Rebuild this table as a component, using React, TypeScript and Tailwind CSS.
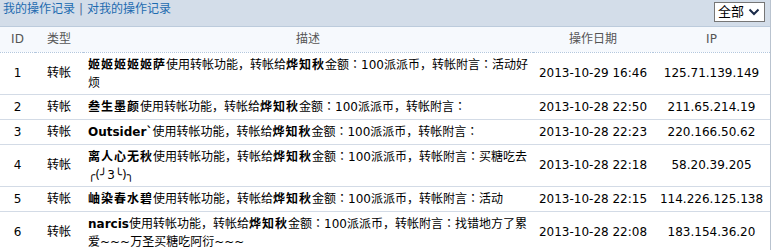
type Row = {
  id: number;
  user: string;
  note: string;
  date: string;
  ip: string;
};

const ROWS: Row[] = [
  { id: 1, user: "姬姬姬姬姬萨", note: "活动好烦", date: "2013-10-29 16:46", ip: "125.71.139.149" },
  { id: 2, user: "叁生墨颜", note: "", date: "2013-10-28 22:50", ip: "211.65.214.19" },
  { id: 3, user: "Outsider`", note: "", date: "2013-10-28 22:23", ip: "220.166.50.62" },
  { id: 4, user: "离人心无秋", note: "买糖吃去╭(╯3╰)╮", date: "2013-10-28 22:18", ip: "58.20.39.205" },
  { id: 5, user: "岫染春水碧", note: "活动", date: "2013-10-28 22:15", ip: "114.226.125.138" },
  { id: 6, user: "narcis", note: "找错地方了累爱~~~万圣买糖吃阿衍~~~", date: "2013-10-28 22:08", ip: "183.154.36.20" },
];

const FONT = "font-['DejaVu_Sans','Noto_Sans_CJK_SC',sans-serif]";

// full-width colon, centred like the original (TC face centres it)
function Colon() {
  return <span className="font-['Noto_Sans_CJK_TC',sans-serif]">：</span>;
}

function Name({ text }: { text: string }) {
  const cjk = /[^\x00-\x7f]/.test(text);
  return <b className={cjk ? "tracking-[1px]" : ""}>{text}</b>;
}

export default function App() {
  return (
    <div className={`w-[771px] border-r border-[#b9c3cf] bg-white text-[12px] leading-[18px] text-black ${FONT}`}>
      {/* tabs bar */}
      <div className="flex h-[27px] items-start justify-between border-b border-[#bccbdc] bg-[#d3dde9] pl-[3px] pr-[5px]">
        <div className="text-[#1d6bb0]">
          <span>我的操作记录</span>
          <span className="px-[4px] text-[#4f6f96]">|</span>
          <span>对我的操作记录</span>
        </div>
        <div className="mt-[2px] flex h-[20px] w-[51px] items-center justify-between border border-[#767676] bg-white pl-[3px] pr-[4px] text-[13px]">
          <span>全部</span>
          <svg width="12" height="8" viewBox="0 0 12 8">
            <path d="M1.5 1.5 L6 6 L10.5 1.5" fill="none" stroke="#1a2a48" strokeWidth="2" />
          </svg>
        </div>
      </div>

      <table className="w-full table-fixed border-collapse">
        <colgroup>
          <col className="w-[35px]" />
          <col className="w-[48px]" />
          <col className="w-[450px]" />
          <col className="w-[120px]" />
          <col />
        </colgroup>
        <thead>
          <tr className="h-[25px] border-b border-dotted border-[#b3c7de] bg-[#f6f9fd] text-[#555]">
            <th className="text-center font-normal">ID</th>
            <th className="text-center font-normal">类型</th>
            <th className="text-center font-normal">描述</th>
            <th className="text-center font-normal">操作日期</th>
            <th className="text-center font-normal">IP</th>
          </tr>
        </thead>
        <tbody>
          {ROWS.map((r) => (
            <tr key={r.id} className="border-b border-[#d3dbe6]">
              <td className="py-[3px] text-center">{r.id}</td>
              <td className="py-[3px] text-center">转帐</td>
              <td className="px-[5px] py-[2px] break-all">
                <Name text={r.user} />
                使用转帐功能，转帐给<b className="tracking-[1px]">烨知秋</b>金额<Colon />100派派币，转帐附言<Colon />
                {r.note}
              </td>
              <td className="py-[3px] text-center whitespace-nowrap">{r.date}</td>
              <td className="py-[3px] text-center whitespace-nowrap">{r.ip}</td>
            </tr>
          ))}
        </tbody>
      </table>
    </div>
  );
}
